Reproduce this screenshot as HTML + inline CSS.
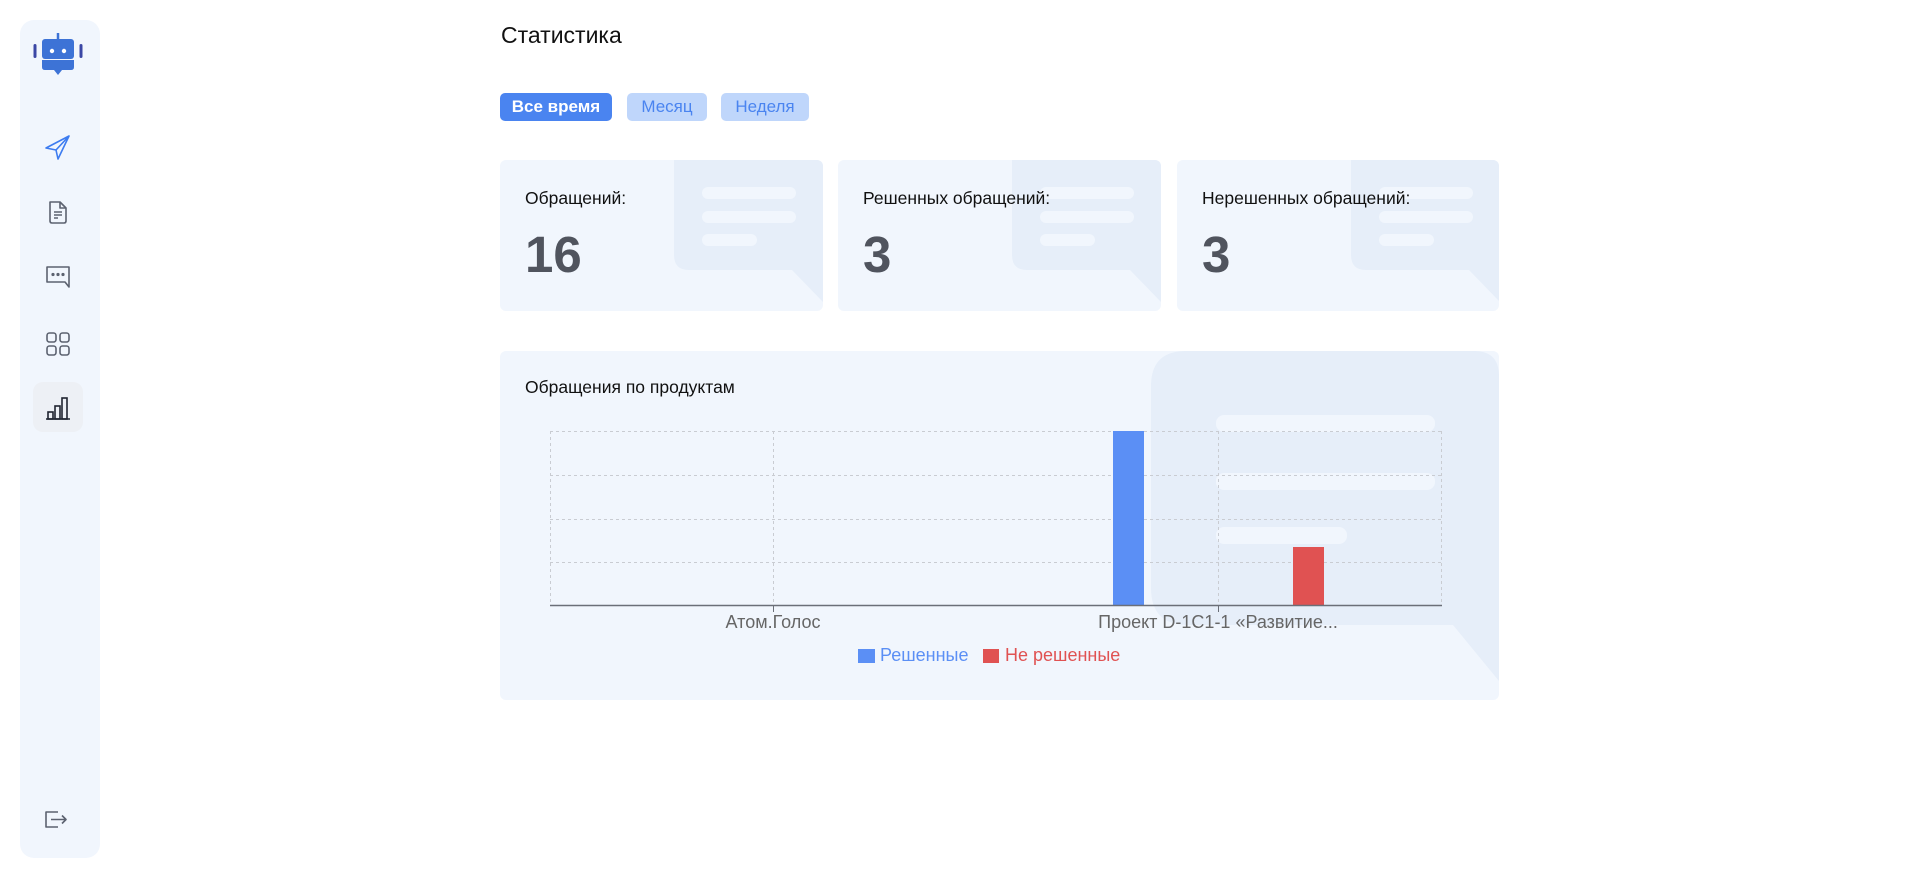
<!DOCTYPE html>
<html><head><meta charset="utf-8"><style>
*{margin:0;padding:0;box-sizing:border-box}
body{width:1920px;height:878px;background:#fff;font-family:"Liberation Sans",sans-serif;position:relative;overflow:hidden;color:#222}
.abs{position:absolute}
.side{left:20px;top:20px;width:80px;height:838px;background:#f1f6fd;border-radius:14px}
.btn{top:93px;height:28px;border-radius:5px;font-size:17px;line-height:28px;text-align:center}
.card{top:160px;width:323px;height:151px;background:#f1f6fd;border-radius:6px;overflow:hidden}
.lbl{position:absolute;left:25px;top:28px;font-size:17.5px;color:#111}
.num{position:absolute;left:25px;top:65px;font-size:51px;font-weight:bold;color:#50545e}
.txt{font-size:18px;color:#666;white-space:nowrap}
</style></head><body>
<div class="abs side"></div>
<svg class="abs" style="left:20px;top:20px" width="80" height="70" viewBox="20 20 80 70">
<line x1="58" y1="33" x2="58" y2="40" stroke="#3d73d6" stroke-width="2.5"/>
<rect x="42" y="39" width="32" height="20" rx="3" fill="#3d73d6"/>
<path d="M42 60H74V67Q74 70 71 70H62L58 75L54 70H45Q42 70 42 67Z" fill="#3d73d6"/>
<rect x="33.5" y="44" width="3" height="14" rx="1.5" fill="#3b47a5"/>
<rect x="79.5" y="44" width="3" height="14" rx="1.5" fill="#3b47a5"/>
<circle cx="52" cy="51" r="2.2" fill="#fff"/><circle cx="64" cy="51" r="2.2" fill="#fff"/>
</svg>
<svg class="abs" style="left:44px;top:134px" width="28" height="28" viewBox="0 0 28 28" fill="none" stroke="#3d7cf0" stroke-width="1.6" stroke-linejoin="round"><path d="M2 14L25 2L14 25L12 16Z"/><path d="M12 16L25 2"/></svg>
<svg class="abs" style="left:45px;top:199px" width="26" height="26" viewBox="0 0 26 26" fill="none" stroke="#5c6270" stroke-width="1.6" stroke-linejoin="round"><path d="M5 3H15L21 9V22Q21 24 19 24H7Q5 24 5 22Z"/><path d="M15 3V9H21"/><path d="M9 13H17M9 16H17M9 19H13"/></svg>
<svg class="abs" style="left:44px;top:263px" width="28" height="28" viewBox="0 0 28 28" fill="none" stroke="#5c6270" stroke-width="1.6" stroke-linejoin="round"><path d="M3 4H25V24L21 19H3Z"/><circle cx="9" cy="11.5" r="0.8" fill="#5c6270"/><circle cx="14" cy="11.5" r="0.8" fill="#5c6270"/><circle cx="19" cy="11.5" r="0.8" fill="#5c6270"/></svg>
<svg class="abs" style="left:45px;top:331px" width="26" height="26" viewBox="0 0 26 26" fill="none" stroke="#5c6270" stroke-width="1.6"><rect x="2" y="2" width="9" height="9" rx="2.5"/><rect x="15" y="2" width="9" height="9" rx="2.5"/><rect x="2" y="15" width="9" height="9" rx="2.5"/><rect x="15" y="15" width="9" height="9" rx="2.5"/></svg>
<div class="abs" style="left:33px;top:382px;width:50px;height:50px;background:#edf0f5;border-radius:10px"></div>
<svg class="abs" style="left:44px;top:394px" width="28" height="28" viewBox="0 0 28 28" fill="none" stroke="#1f2430" stroke-width="1.6"><path d="M2 25H26"/><rect x="4" y="18" width="5" height="7"/><rect x="11" y="12" width="5" height="13"/><rect x="18" y="4" width="5" height="21"/></svg>
<svg class="abs" style="left:44px;top:807px" width="26" height="26" viewBox="0 0 26 26" fill="none" stroke="#5c6270" stroke-width="1.6" stroke-linejoin="round"><path d="M14 5H2V20H14"/><path d="M7 12.5H22M18 8.5L22 12.5L18 16.5"/></svg>

<div class="abs" style="left:501px;top:22px;font-size:23px;color:#111">Статистика</div>
<div class="abs btn" style="left:500px;width:112px;background:#4a84f0;color:#fff;font-weight:bold">Все время</div>
<div class="abs btn" style="left:627px;width:80px;background:#bfd6fb;color:#4a84f0">Месяц</div>
<div class="abs btn" style="left:721px;width:88px;background:#bfd6fb;color:#4a84f0">Неделя</div>

<div class="abs card" style="left:500px">
<svg class="abs" style="left:0;top:0" width="323" height="151"><path d="M174 0H323V142L292 110H189Q174 110 174 95Z" fill="#e6eef9"/><rect x="202" y="27" width="94" height="12" rx="6" fill="#f1f6fd"/><rect x="202" y="51" width="94" height="12" rx="6" fill="#f1f6fd"/><rect x="202" y="74" width="55" height="12" rx="6" fill="#f1f6fd"/></svg>
<div class="lbl">Обращений:</div><div class="num">16</div></div>
<div class="abs card" style="left:838px">
<svg class="abs" style="left:0;top:0" width="323" height="151"><path d="M174 0H323V142L292 110H189Q174 110 174 95Z" fill="#e6eef9"/><rect x="202" y="27" width="94" height="12" rx="6" fill="#f1f6fd"/><rect x="202" y="51" width="94" height="12" rx="6" fill="#f1f6fd"/><rect x="202" y="74" width="55" height="12" rx="6" fill="#f1f6fd"/></svg>
<div class="lbl">Решенных обращений:</div><div class="num">3</div></div>
<div class="abs card" style="left:1177px;width:322px">
<svg class="abs" style="left:0;top:0" width="323" height="151"><path d="M174 0H323V142L292 110H189Q174 110 174 95Z" fill="#e6eef9"/><rect x="202" y="27" width="94" height="12" rx="6" fill="#f1f6fd"/><rect x="202" y="51" width="94" height="12" rx="6" fill="#f1f6fd"/><rect x="202" y="74" width="55" height="12" rx="6" fill="#f1f6fd"/></svg>
<div class="lbl">Нерешенных обращений:</div><div class="num">3</div></div>

<div class="abs" style="left:500px;top:351px;width:999px;height:349px;background:#f1f6fd;border-radius:6px;overflow:hidden">
<svg class="abs" style="left:0;top:0" width="999" height="349">
<path d="M651 0H974Q999 0 999 25V330L953 274H688Q651 274 651 237V35Q651 0 686 0Z" fill="#e6eef9"/>
<rect x="716" y="64" width="219" height="17" rx="8" fill="#f1f6fd"/>
<rect x="716" y="122" width="219" height="17" rx="8" fill="#f1f6fd"/>
<rect x="716" y="176" width="131" height="17" rx="8" fill="#f1f6fd"/>
<g stroke="#c9ccd2" stroke-width="1" stroke-dasharray="3,3" fill="none">
<path d="M50 80.5H942M50 124.5H942M50 168.5H942M50 211.5H942"/>
<path d="M50.5 80V254M273.5 80V254M718.5 80V254M941.5 80V254"/>
</g>
<rect x="613" y="80" width="31" height="174" fill="#5b8ff5"/>
<rect x="793" y="196" width="31" height="58" fill="#e05252"/>
<path d="M50 254.5H942" stroke="#6b6f78" stroke-width="1.5"/>
<path d="M273.5 254V261M718.5 254V261" stroke="#6b6f78"/>
</svg>
<div class="abs" style="left:25px;top:26px;font-size:17.5px;color:#111">Обращения по продуктам</div>
<div class="abs txt" style="left:273px;top:261px;transform:translateX(-50%)">Атом.Голос</div>
<div class="abs txt" style="left:718px;top:261px;transform:translateX(-50%)">Проект D-1C1-1 «Развитие...</div>
<div class="abs" style="left:358px;top:298px;width:17px;height:14px;background:#5b8ff5"></div>
<div class="abs txt" style="left:380px;top:294px;color:#5b8ff5">Решенные</div>
<div class="abs" style="left:483px;top:298px;width:16px;height:14px;background:#e05252"></div>
<div class="abs txt" style="left:505px;top:294px;color:#e05252">Не решенные</div>
</div>
</body></html>
